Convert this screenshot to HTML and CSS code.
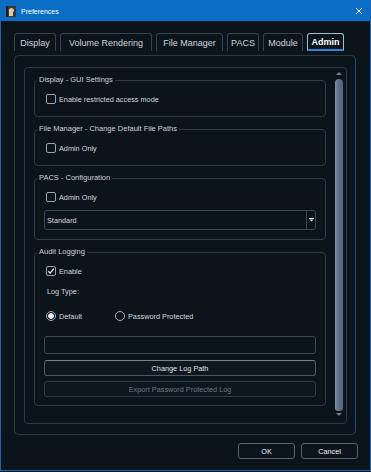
FILE: index.html
```html
<!DOCTYPE html>
<html>
<head>
  <link rel="stylesheet" href="styles.css">
  <title>Preferences</title>
</head>
<body>
<div class="window">
  <div class="titlebar">
    <svg class="app-icon" viewBox="0 0 10 11">
      <rect width="10" height="11" fill="#3a3733"/>
      <path d="M3 10 L3 6 Q2 3 5 2 Q8 2 8 5 L7 6 L7 10 Z" fill="#d9cdb4"/>
      <rect x="0" y="0" width="2" height="11" fill="#1d1c1a"/>
    </svg>
    <span class="title">Preferences</span>
    <svg class="close" viewBox="0 0 6 6">
      <path d="M0 0 L6 6 M6 0 L0 6" stroke="#fff" stroke-width="1"/>
    </svg>
  </div>

  <div class="content">
    <div class="tabs">
      <div class="tab tab-display">Display</div>
      <div class="tab tab-volume">Volume Rendering</div>
      <div class="tab tab-files">File Manager</div>
      <div class="tab tab-pacs">PACS</div>
      <div class="tab tab-module">Module</div>
      <div class="tab tab-admin active">Admin</div>
    </div>

    <div class="pane">
      <div class="scroll-area">
        <div class="groups">

          <fieldset class="group">
            <legend>Display - GUI Settings</legend>
            <div class="group-body">
              <div class="row"><span class="checkbox"></span>Enable restricted access mode</div>
            </div>
          </fieldset>

          <fieldset class="group">
            <legend>File Manager - Change Default File Paths</legend>
            <div class="group-body">
              <div class="row"><span class="checkbox"></span>Admin Only</div>
            </div>
          </fieldset>

          <fieldset class="group g-pacs">
            <legend>PACS - Configuration</legend>
            <div class="group-body">
              <div class="row"><span class="checkbox"></span>Admin Only</div>
              <div class="combo">
                <div class="combo-text">Standard</div>
                <div class="combo-button">
                  <svg width="5" height="4" viewBox="0 0 5 4">
                    <rect x="0" y="0" width="5" height="1" fill="#e8ecef"/>
                    <path d="M0.5 1.5 L4.5 1.5 L2.5 3.5 Z" fill="#e8ecef"/>
                  </svg>
                </div>
              </div>
            </div>
          </fieldset>

          <fieldset class="group g-audit">
            <legend>Audit Logging</legend>
            <div class="group-body">
              <div class="row">
                <span class="checkbox checked">
                  <svg width="8" height="8" viewBox="0 0 8 8"><path d="M1.3 4.2 L3.2 6.1 L6.8 1.6" fill="none" stroke="#f2f4f6" stroke-width="1.3"/></svg>
                </span>Enable
              </div>
              <div class="row label-row">Log Type:</div>
              <div class="row radio-row">
                <div class="radio-option option-default"><span class="radio checked"></span>Default</div>
                <div class="radio-option"><span class="radio"></span>Password Protected</div>
              </div>
              <div class="field"></div>
              <button class="action">Change Log Path</button>
              <button class="action disabled">Export Password Protected Log</button>
            </div>
          </fieldset>

        </div>
        <div class="scrollbar">
          <div class="arrow-up"></div>
          <div class="thumb"></div>
          <div class="arrow-down"></div>
        </div>
      </div>
    </div>

    <div class="footer">
      <button class="btn">OK</button>
      <button class="btn">Cancel</button>
    </div>
  </div>
</div>
</body>
</html>
```

FILE: styles.css
```css
/* Ventana general */
body {
  margin: 0;
  background-color: #0b131b;
  font-family: "Liberation Sans", Arial, sans-serif;
  font-size: 7.3px;
  color: #d3d8dd;
}

.window {
  width: 371px;
  height: 471px;
  box-sizing: border-box;
  border: 1px solid #1767b8;
  border-top-color: #0b6ec6;
  display: flex;
  flex-direction: column;
}

/* Barra de titulo */
.titlebar {
  height: 20px;
  background-color: #0b6ec6;
  display: flex;
  align-items: center;
  padding-left: 5px;
  color: #fff;
  font-size: 7px;
}

.app-icon {
  width: 10px;
  height: 11px;
  margin-right: 5px;
}

.close {
  width: 6px;
  height: 6px;
  margin-left: auto;
  margin-right: 8px;
}

.content {
  flex: 1;
  padding: 12px 12px 0 13px;
  display: flex;
  flex-direction: column;
}

/* Pestañas */
.tabs {
  display: flex;
  gap: 4px;
  height: 18px;
}

.tab {
  box-sizing: border-box;
  height: 18px;
  border: 1px solid #36424e;
  border-bottom: none;
  border-radius: 3px 3px 0 0;
  font-size: 9px;
  color: #cfd5db;
  display: flex;
  align-items: center;
  justify-content: center;
}

.tab-display { width: 42px; }
.tab-volume { width: 92px; }
.tab-files { width: 67px; }
.tab-pacs { width: 32px; }
.tab-module { width: 40px; }
.tab-admin { width: 37px; }

.tab.active {
  border-color: #a9bccb;
  border-bottom: 2px solid #2a86db;
  font-weight: bold;
  color: #fff;
}

/* Panel de la pestaña */
.pane {
  margin-top: 4px;
  margin-right: 2px;
  height: 380px;
  box-sizing: border-box;
  border: 1px solid #2b3844;
  border-right-color: #1d4d78;
  border-radius: 5px;
  padding: 11px 8px 10px 9px;
}

.scroll-area {
  height: 357px;
  box-sizing: border-box;
  border: 1px solid #2e3b47;
  border-radius: 4px;
  display: flex;
}

.groups {
  width: 301px;
  box-sizing: border-box;
  padding: 7px 0 0 9px;
  display: flex;
  flex-direction: column;
  gap: 7px;
}

/* Grupos */
.group {
  margin: 0;
  padding: 0;
  min-width: 0;
  border: 1px solid #2f3c48;
  border-radius: 4px;
}

.group legend {
  margin-left: 2px;
  padding: 0 2px;
  line-height: 10px;
  font-size: 7.5px;
  color: #cdd3d9;
}

.group-body {
  padding: 7px 9px 10px 9px;
}

.g-pacs .group-body { padding-bottom: 9px; }
.g-audit .group-body { padding-bottom: 8px; }

.row {
  display: flex;
  align-items: center;
  gap: 3px;
  height: 14px;
  padding-left: 2px;
}

.checkbox {
  width: 10px;
  height: 10px;
  box-sizing: border-box;
  border: 1px solid #9aa5af;
  border-radius: 2px;
  display: flex;
  align-items: center;
  justify-content: center;
}

.label-row {
  margin-top: 6px;
  padding-left: 3px;
}

.radio-row {
  margin-top: 11px;
  gap: 0;
}

.radio-option {
  display: flex;
  align-items: center;
  gap: 3px;
}

.option-default { width: 69px; }

.radio {
  width: 10px;
  height: 10px;
  box-sizing: border-box;
  border: 1px solid #a7b1ba;
  border-radius: 50%;
}

.radio.checked {
  background: radial-gradient(circle, #e4e8eb 0 2.6px, transparent 3.1px);
}

/* Combo y campo de texto */
.combo {
  margin-top: 6px;
  height: 20px;
  box-sizing: border-box;
  border: 1px solid #3a4854;
  border-radius: 3px;
  display: flex;
}

.combo-text {
  flex: 1;
  padding-left: 2px;
  display: flex;
  align-items: center;
}

.combo-button {
  width: 8px;
  border-left: 1px solid #3a4854;
  display: flex;
  align-items: center;
  justify-content: center;
}

.field {
  margin-top: 13px;
  height: 18px;
  box-sizing: border-box;
  border: 1px solid #3a4854;
  border-radius: 3px;
}

/* Botones */
.action {
  display: block;
  width: 100%;
  margin-top: 6px;
  height: 16px;
  box-sizing: border-box;
  border: 1px solid #4a5764;
  border-top-color: #78858f;
  border-radius: 3px;
  background-color: #0d1720;
  color: #e1e5e8;
  font: inherit;
  padding: 0;
}

.action.disabled {
  margin-top: 5px;
  border-color: #2f3b46;
  color: #6c7782;
}

.footer {
  display: flex;
  justify-content: flex-end;
  gap: 6px;
  margin-top: 8px;
}

.btn {
  width: 57px;
  height: 16px;
  box-sizing: border-box;
  border: 1px solid #56626e;
  border-radius: 3px;
  background-color: #0c151d;
  color: #eef1f3;
  font: inherit;
  padding: 0;
}

/* Barra de desplazamiento */
.scrollbar {
  width: 8px;
  margin-left: 9px;
  padding-top: 4px;
  display: flex;
  flex-direction: column;
  align-items: center;
}

.arrow-up {
  width: 0;
  height: 0;
  border-left: 3px solid transparent;
  border-right: 3px solid transparent;
  border-bottom: 3px solid #6d7f8e;
}

.thumb {
  margin-top: 4px;
  width: 8px;
  height: 332px;
  border-radius: 4px 4px 3px 3px;
  background: linear-gradient(to right, #8196a7, #5f7384 35%, #52667a);
}

.arrow-down {
  margin-top: 2px;
  width: 0;
  height: 0;
  border-left: 3px solid transparent;
  border-right: 3px solid transparent;
  border-top: 3px solid #6d7f8e;
}
```
